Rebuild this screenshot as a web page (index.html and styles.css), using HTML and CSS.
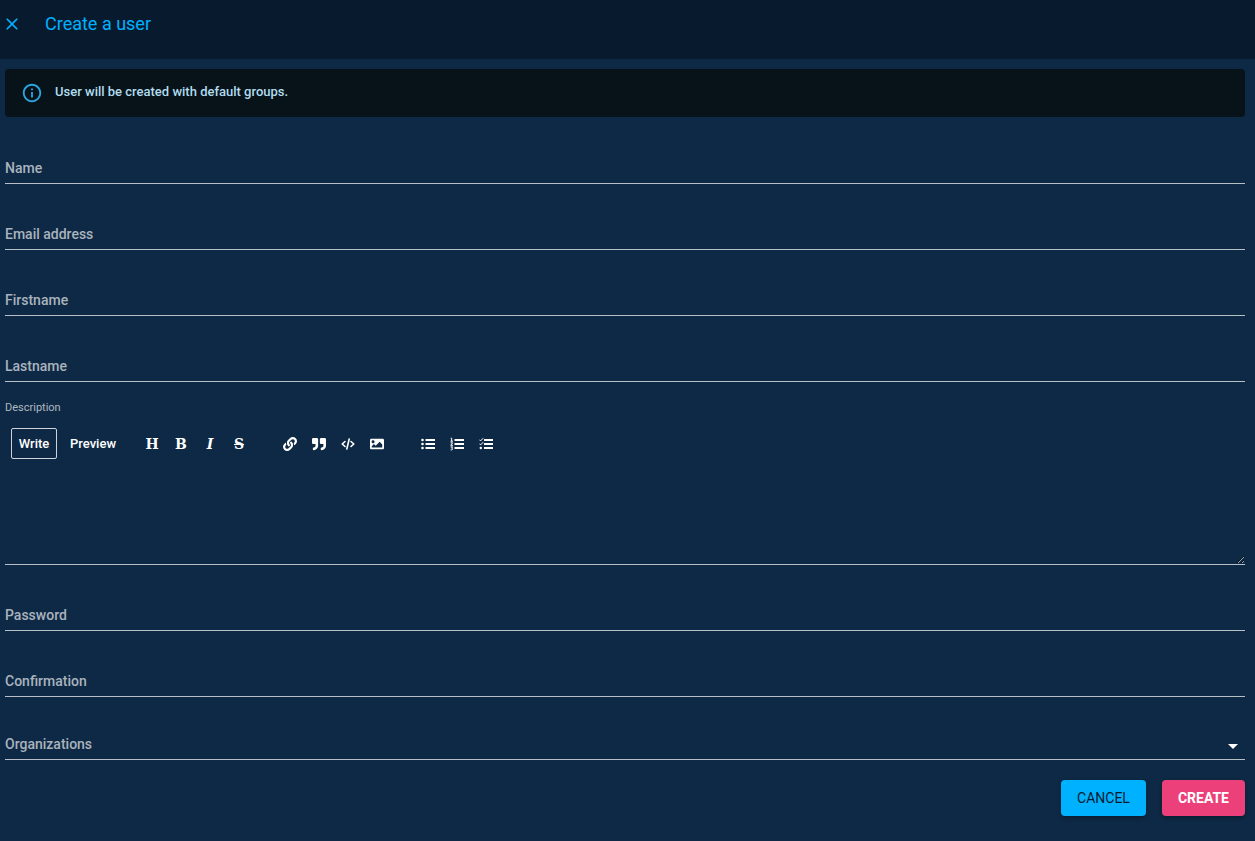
FILE: index.html
```html
<!DOCTYPE html>
<html lang="en">
<head>
<meta charset="utf-8">
<meta name="viewport" content="width=device-width, initial-scale=1">
<title>Create a user</title>
<link rel="stylesheet" href="styles.css">
</head>
<body>
<header class="header">
  <button class="close" type="button" aria-label="Close"><svg viewBox="0 0 24 24"><path d="M19 6.400 17.600 5 12 10.600 6.400 5 5 6.400 10.600 12 5 17.600 6.400 19 12 13.400 17.600 19 19 17.600 13.400 12z"/></svg></button>
  <h1 class="title">Create a user</h1>
</header>
<main>
<form class="form">
  <div class="alert">
    <svg class="alert-icon" viewBox="0 0 24 24"><path d="M11 7h2v2h-2zm0 4h2v6h-2zm1-9C6.480 2 2 6.480 2 12s4.480 10 10 10 10-4.480 10-10S17.520 2 12 2zm0 18c-4.410 0-8-3.590-8-8s3.590-8 8-8 8 3.590 8 8-3.590 8-8 8z"/></svg>
    <p class="alert-text">User will be created with default groups.</p>
  </div>
  <div class="fields">
    <div class="field"><label for="name">Name</label><input id="name" type="text"></div>
    <div class="field"><label for="email">Email address</label><input id="email" type="email"></div>
    <div class="field"><label for="first">Firstname</label><input id="first" type="text"></div>
    <div class="field"><label for="last">Lastname</label><input id="last" type="text"></div>
  </div>
  <div class="editor">
    <label class="editor-label" for="description">Description</label>
    <div class="toolbar">
      <div class="tabs">
        <button class="tab tab-active" type="button">Write</button>
        <button class="tab" type="button">Preview</button>
      </div>
      <div class="tools">
        <button class="tool" type="button" aria-label="Heading"><span class="glyph">H</span></button>
        <button class="tool" type="button" aria-label="Bold"><span class="glyph">B</span></button>
        <button class="tool" type="button" aria-label="Italic"><span class="glyph glyph-italic">I</span></button>
        <button class="tool" type="button" aria-label="Strikethrough"><span class="glyph glyph-strike">S</span></button>
      </div>
      <div class="tools">
        <button class="tool" type="button" aria-label="Link"><svg viewBox="0 0 512 512"><path d="M326.612 185.391c59.747 59.809 58.927 155.698.36 214.590-.11.12-.24.25-.36.37l-67.200 67.200c-59.270 59.270-155.699 59.262-214.960 0-59.270-59.260-59.270-155.700 0-214.960l37.106-37.106c9.840-9.840 26.786-3.300 27.294 10.606.648 17.722 3.826 35.527 9.690 52.721 1.986 5.822.567 12.262-3.783 16.612l-13.087 13.087c-28.026 28.026-28.905 73.660-1.155 101.960 28.024 28.579 74.086 28.749 102.325.51l67.200-67.190c28.191-28.191 28.073-73.757 0-101.830-3.701-3.694-7.429-6.564-10.341-8.569a16.037 16.037 0 0 1-6.947-12.606c-.396-10.567 3.348-21.456 11.698-29.806l21.054-21.055c5.521-5.521 14.182-6.199 20.584-1.731a152.482 152.482 0 0 1 20.522 17.197zM467.547 44.449c-59.261-59.262-155.690-59.270-214.960 0l-67.200 67.200c-.12.12-.25.25-.36.37-58.566 58.892-59.387 154.781.36 214.590a152.454 152.454 0 0 0 20.521 17.196c6.402 4.468 15.064 3.789 20.584-1.731l21.054-21.055c8.350-8.350 12.094-19.239 11.698-29.806a16.037 16.037 0 0 0-6.947-12.606c-2.912-2.005-6.640-4.875-10.341-8.569-28.073-28.073-28.191-73.639 0-101.830l67.200-67.190c28.239-28.239 74.300-28.069 102.325.51 27.750 28.300 26.872 73.934-1.155 101.960l-13.087 13.087c-4.350 4.350-5.769 10.790-3.783 16.612 5.864 17.194 9.042 34.999 9.690 52.721.509 13.906 17.454 20.446 27.294 10.606l37.106-37.106c59.271-59.259 59.271-155.699.001-214.959z"/></svg></button>
        <button class="tool" type="button" aria-label="Quote"><svg viewBox="0 0 512 512"><path d="M464 32H336c-26.500 0-48 21.500-48 48v128c0 26.500 21.500 48 48 48h80v64c0 35.300-28.700 64-64 64h-8c-13.300 0-24 10.700-24 24v48c0 13.300 10.700 24 24 24h8c88.400 0 160-71.600 160-160V80c0-26.500-21.500-48-48-48zm-288 0H48C21.500 32 0 53.500 0 80v128c0 26.500 21.500 48 48 48h80v64c0 35.300-28.700 64-64 64h-8c-13.300 0-24 10.700-24 24v48c0 13.300 10.700 24 24 24h8c88.400 0 160-71.600 160-160V80c0-26.500-21.500-48-48-48z"/></svg></button>
        <button class="tool" type="button" aria-label="Code"><svg viewBox="0 0 14 14"><path class="line" d="M4 4.500 1.200 7 4 9.500M10 4.500 12.800 7 10 9.500M8.200 2 5.800 12"/></svg></button>
        <button class="tool" type="button" aria-label="Image"><svg viewBox="0 0 512 512"><path d="M464 448H48c-26.510 0-48-21.490-48-48V112c0-26.510 21.490-48 48-48h416c26.510 0 48 21.490 48 48v288c0 26.510-21.490 48-48 48zM112 120c-30.928 0-56 25.072-56 56s25.072 56 56 56 56-25.072 56-56-25.072-56-56-56zM64 384h384V272l-87.515-87.515c-4.686-4.686-12.284-4.686-16.971 0L208 320l-55.515-55.515c-4.686-4.686-12.284-4.686-16.971 0L64 336v48z" fill-rule="evenodd"/></svg></button>
      </div>
      <div class="tools">
        <button class="tool" type="button" aria-label="Bulleted list"><svg viewBox="0 0 14 14"><path d="M4.500 2H14v2H4.500zM4.500 6H14v2H4.500zM4.500 10H14v2H4.500z"/><circle cx="1.500" cy="3" r="1.300"/><circle cx="1.500" cy="7" r="1.300"/><circle cx="1.500" cy="11" r="1.300"/></svg></button>
        <button class="tool" type="button" aria-label="Numbered list"><svg viewBox="0 0 14 14"><path d="M4.500 2H14v2H4.500zM4.500 6H14v2H4.500zM4.500 10H14v2H4.500z"/><path class="thin" d="M.7 1.200h1v3M.5 4.200h2.500M.6 5.800h2L.7 8.300h2.300M.6 9.900h2L1.600 11.200q1.200.2.900 1.200-.5.800-1.900.4"/></svg></button>
        <button class="tool" type="button" aria-label="Task list"><svg viewBox="0 0 14 14"><path d="M5 2h9v2H5zM5 6h9v2H5zM5 10h9v2H5z"/><path class="thin" d="m.4 2.700 1.200 1.200L4.200 1.200M.4 6.700l1.200 1.200 2.600-2.700"/><circle cx="1.800" cy="11" r="1.200"/></svg></button>
      </div>
    </div>
    <textarea class="textarea" id="description"></textarea>
  </div>
  <div class="fields fields-lower">
    <div class="field"><label for="password">Password</label><input id="password" type="password"></div>
    <div class="field"><label for="confirmation">Confirmation</label><input id="confirmation" type="password"></div>
  </div>
  <div class="field field-select">
    <label for="organizations">Organizations</label>
    <select id="organizations"><option value=""></option></select>
    <svg class="arrow" viewBox="0 0 24 24"><path d="m7 10 5 5 5-5z"/></svg>
  </div>
  <div class="actions">
    <button class="btn btn-cancel" type="button">CANCEL</button>
    <button class="btn btn-create" type="submit">CREATE</button>
  </div>
</form>
</main>
</body>
</html>
```
FILE: styles.css
```css
* { box-sizing: border-box; }
body {
  margin: 0;
  background: #0e2945;
  color: #fff;
  color-scheme: dark;
  font-family: Roboto, sans-serif;
  font-size: 14px;
}
button, input, select, textarea { font: inherit; color: inherit; }
button { border: 0; padding: 0; background: none; cursor: pointer; }
svg { display: block; fill: currentColor; }
.header {
  display: flex;
  align-items: center;
  gap: 21px;
  padding: 12px 0 23px;
  background: #071a2e;
  color: #00b1ff;
}
.close svg { width: 24px; height: 24px; padding: 2px; }
.title { margin: 0; font-size: 18px; font-weight: 400; line-height: 24px; }
.form { padding: 10px 10px 25px 5px; }
.alert {
  display: flex;
  align-items: center;
  gap: 12px;
  padding: 13px 16px;
  border-radius: 4px;
  background: #071318;
}
.alert-icon { width: 22px; height: 22px; color: #29a6e0; }
.alert-text { margin: 0; padding-bottom: 2px; font-size: 13px; font-weight: 500; line-height: 20px; color: #b0dcef; }
.fields { display: grid; gap: 36px; padding-top: 37px; }
.fields-lower { padding-top: 36px; }
.field { display: grid; height: 30px; border-bottom: 1px solid #b7bfc7; }
.field > * { grid-area: 1 / 1; }
.field label { color: #a9b3bd; font-size: 14px; font-weight: 500; line-height: 28px; }
.field input, .field select {
  width: 100%;
  min-width: 0;
  border: 0;
  padding: 0;
  outline: 0;
  background: transparent;
  appearance: none;
}
.field-select { margin-top: 33px; }
.arrow { width: 24px; height: 24px; place-self: center end; margin-top: 3px; pointer-events: none; }
.editor { padding-top: 18px; }
.editor-label { display: block; font-size: 11px; line-height: 16px; color: #afb8c1; }
.toolbar { display: flex; align-items: center; gap: 34px; padding: 12px 6px 13px; }
.tabs { display: flex; gap: 6px; margin-right: -14px; }
.tab { height: 31px; padding: 0 6px; border: 1px solid transparent; border-radius: 2px; font-size: 13px; font-weight: 500; }
.tab-active { min-width: 46px; border-color: #cfd4da; }
.tools { display: flex; gap: 13px; margin-left: 1px; }
.tool { display: grid; place-items: center; width: 16px; height: 20px; }
.tool svg { width: 14px; height: 14px; }
.glyph { font: 700 14px/20px "DejaVu Serif", serif; }
.glyph-italic { font-style: italic; }
.glyph-strike { text-decoration: line-through; }
.line { fill: none; stroke: currentColor; stroke-width: 1.600; stroke-linecap: round; stroke-linejoin: round; }
.thin { fill: none; stroke: currentColor; stroke-width: 1; }
.textarea {
  display: block;
  width: 100%;
  height: 93px;
  padding: 8px 0;
  border: 0;
  border-bottom: 1px solid #b7bfc7;
  outline: 0;
  background: transparent;
  resize: vertical;
}
.actions { display: flex; justify-content: flex-end; gap: 16px; padding-top: 20px; }
.btn {
  height: 36px;
  padding: 0 16px;
  border-radius: 4px;
  font-size: 14px;
  box-shadow: 0 2px 4px rgba(0, 0, 0, .3);
}
.btn-cancel { background: #00b1ff; color: #071a2e; }
.btn-create { background: #ec407a; font-weight: 700; }
```
